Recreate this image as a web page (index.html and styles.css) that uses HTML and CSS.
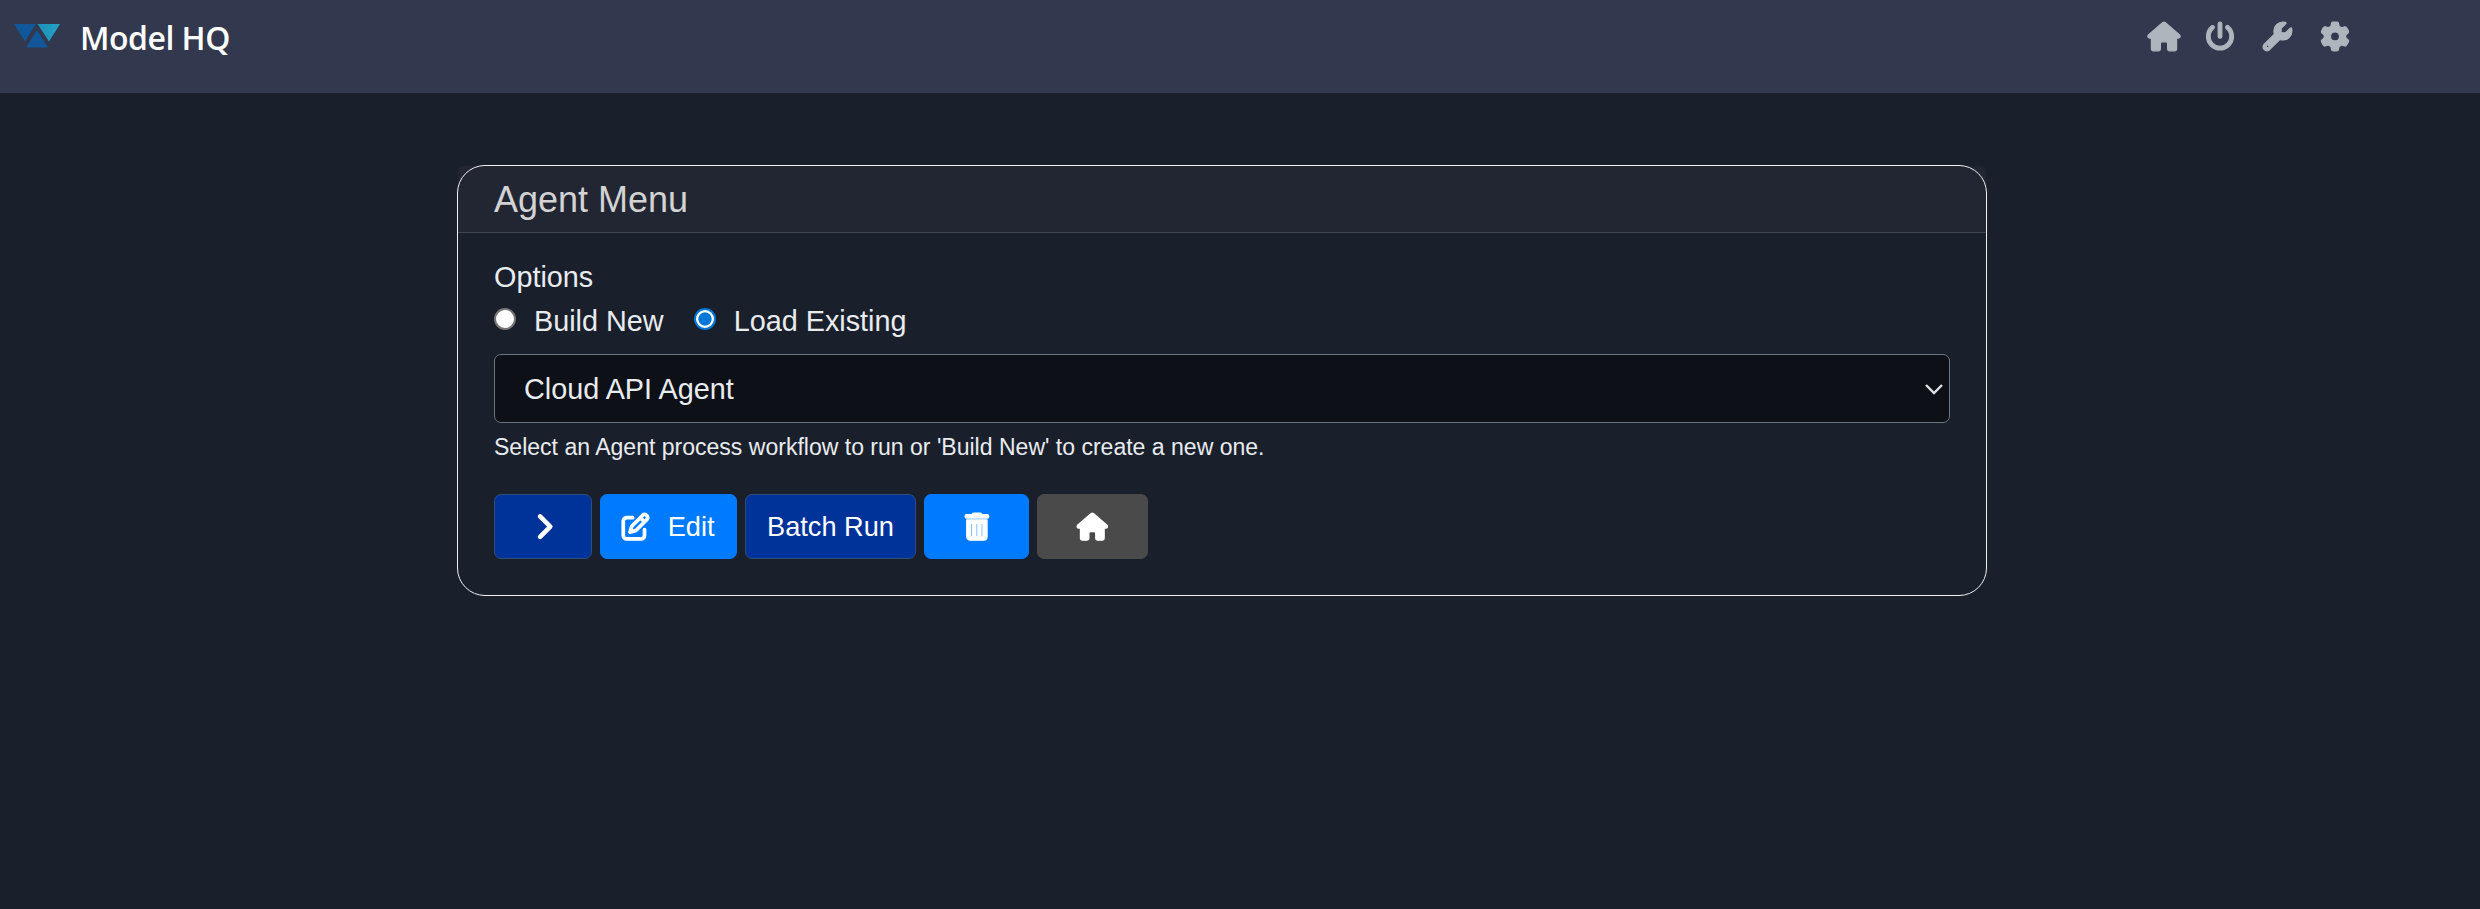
FILE: index.html
```html
<!DOCTYPE html>
<html lang="en">
<head>
<meta charset="utf-8">
<title>Model HQ</title>
<link rel="stylesheet" href="styles.css">
</head>
<body>
<svg class="sprite" width="0" height="0" aria-hidden="true">
  <symbol id="house" viewBox="0 0 576 512" overflow="visible"><path d="M575.8 255.5c0 18-15 32.100-32 32.100h-32l.7 160.200c0 2.700-.2 5.400-.5 8.100V472c0 22.100-17.900 40-40 40H456c-1.100 0-2.200 0-3.300-.1c-1.400 .1-2.800 .1-4.200 .1H416 392c-22.100 0-40-17.900-40-40V448 384c0-17.700-14.300-32-32-32H256c-17.700 0-32 14.300-32 32v64 24c0 22.100-17.900 40-40 40H160 128.100c-1.500 0-3-.1-4.500-.2c-1.200 .1-2.400 .2-3.600 .2H104c-22.100 0-40-17.900-40-40V360c0-.9 0-1.900 .1-2.800V287.600H32c-18 0-32-14-32-32.100c0-9 3-17 10-24L266.400 8c7-7 15-8 22-8s15 2 21 7L564.800 231.500c8 7 12 15 11 24z"/></symbol>
</svg>
<header class="navbar">
  <a class="brand">
    <svg class="logo" viewBox="0 0 48 26">
      <defs><linearGradient id="teal" x1="0" y1="0" x2="1" y2="0"><stop offset="0" stop-color="#1c8fb8"/><stop offset="1" stop-color="#25a3c9"/></linearGradient></defs>
      <path d="M1 1H23L12 18.500Z" fill="#10589a"/>
      <path d="M24.500 1H47L36 18.500Z" fill="url(#teal)"/>
      <path d="M24 7L35 24.500H13Z" fill="#14569a"/>
    </svg>
    <span class="brand-name">Model HQ</span>
  </a>
  <nav class="nav-icons">
    <svg class="icon-house" viewBox="0 0 576 512"><use href="#house"/></svg>
    <svg class="icon-power" viewBox="0 0 512 512"><path d="M288 32c0-17.700-14.300-32-32-32s-32 14.300-32 32V256c0 17.700 14.300 32 32 32s32-14.300 32-32V32zM143.500 120.600c13.600-11.300 15.400-31.500 4.100-45.100s-31.500-15.400-45.100-4.100C49.700 115.400 16 181.800 16 256c0 132.500 107.500 240 240 240s240-107.500 240-240c0-74.200-33.800-140.600-86.600-184.600c-13.600-11.300-33.800-9.400-45.100 4.100s-9.400 33.800 4.100 45.100c38.900 32.300 63.500 81 63.500 135.400c0 97.200-78.800 176-176 176s-176-78.800-176-176c0-54.400 24.700-103.100 63.500-135.400z"/></svg>
    <svg class="icon-wrench" viewBox="0 0 512 512"><path d="M352 320c88.400 0 160-71.600 160-160c0-15.300-2.200-30.100-6.200-44.200c-3.100-10.800-16.400-13.200-24.300-5.300l-76.800 76.800c-3 3-7.100 4.700-11.300 4.700H336c-8.800 0-16-7.200-16-16V118.600c0-4.200 1.700-8.300 4.700-11.300l76.800-76.800c7.900-7.900 5.400-21.200-5.300-24.300C382.100 2.200 367.300 0 352 0C263.600 0 192 71.600 192 160c0 19.100 3.400 37.500 9.500 54.500L19.900 396.100C7.200 408.800 0 426.100 0 444.100C0 481.600 30.400 512 67.900 512c18 0 35.300-7.200 48-19.900L297.500 310.500c17 6.200 35.400 9.500 54.500 9.500zM80 408a24 24 0 1 1 0 48 24 24 0 1 1 0-48z"/></svg>
    <svg class="icon-gear" viewBox="0 0 512 512"><path d="M495.900 166.600c3.200 8.700 .5 18.400-6.400 24.600l-43.300 39.400c1.100 8.300 1.700 16.800 1.700 25.400s-.6 17.100-1.700 25.400l43.300 39.400c6.900 6.200 9.600 15.900 6.400 24.600c-4.400 11.900-9.700 23.300-15.800 34.300l-4.700 8.100c-6.600 11-14 21.400-22.100 31.200c-5.900 7.200-15.700 9.600-24.500 6.800l-55.700-17.700c-13.400 10.300-28.200 18.900-44 25.400l-12.500 57.100c-2 9.100-9 16.300-18.200 17.800c-13.800 2.300-28 3.500-42.500 3.500s-28.700-1.200-42.500-3.500c-9.200-1.500-16.200-8.700-18.200-17.800l-12.500-57.100c-15.800-6.500-30.600-15.100-44-25.400L83.100 425.900c-8.800 2.800-18.600 .3-24.500-6.800c-8.100-9.800-15.500-20.200-22.100-31.200l-4.700-8.100c-6.100-11-11.400-22.400-15.800-34.300c-3.200-8.700-.5-18.400 6.400-24.600l43.300-39.400C64.600 273.100 64 264.600 64 256s.6-17.100 1.700-25.400L22.400 191.200c-6.900-6.200-9.600-15.900-6.400-24.600c4.400-11.900 9.700-23.300 15.800-34.300l4.700-8.100c6.600-11 14-21.400 22.100-31.200c5.900-7.200 15.700-9.600 24.500-6.800l55.700 17.700c13.400-10.300 28.200-18.900 44-25.400l12.500-57.100c2-9.100 9-16.300 18.200-17.800C227.300 1.200 241.500 0 256 0s28.700 1.200 42.500 3.500c9.200 1.500 16.200 8.700 18.200 17.800l12.500 57.100c15.800 6.500 30.600 15.100 44 25.400l55.700-17.700c8.800-2.800 18.600-.3 24.500 6.800c8.100 9.800 15.500 20.200 22.100 31.200l4.700 8.100c6.100 11 11.400 22.400 15.800 34.300zM256 336a80 80 0 1 0 0-160 80 80 0 1 0 0 160z"/></svg>
  </nav>
</header>
<main class="card">
  <h1 class="card-header">Agent Menu</h1>
  <form class="card-body">
    <div class="options-label">Options</div>
    <div class="radios">
      <label class="radio"><span class="dot"></span>Build New</label>
      <label class="radio"><span class="dot checked"></span>Load Existing</label>
    </div>
    <div class="select">
      <span>Cloud API Agent</span>
      <svg class="caret" viewBox="0 0 18 11"><path d="M1 1L9 9L17 1"/></svg>
    </div>
    <div class="hint">Select an Agent process workflow to run or 'Build New' to create a new one.</div>
    <div class="buttons">
      <button type="button" class="btn navy go"><svg class="icon-chevron" viewBox="0 0 320 512"><path d="M310.600 233.400c12.500 12.500 12.500 32.800 0 45.300l-192 192c-12.500 12.500-32.800 12.500-45.300 0s-12.500-32.800 0-45.300L242.700 256 73.400 86.600c-12.500-12.500-12.500-32.800 0-45.300s32.800-12.500 45.300 0l192 192z"/></svg></button>
      <button type="button" class="btn blue edit"><svg class="icon-pen" viewBox="0 0 512 512"><path d="M441 58.900L453.100 71c9.400 9.400 9.400 24.600 0 33.900L424 134.100 377.900 88 407 58.900c9.400-9.400 24.600-9.400 33.900 0zM209.800 256.200L344 121.900 390.100 168 255.800 302.200c-2.900 2.900-6.500 5-10.400 6.100l-58.500 16.700 16.700-58.500c1.100-3.900 3.200-7.500 6.100-10.400zM373.100 25L175.800 222.200c-8.700 8.700-15 19.400-18.300 31.100l-28.600 100c-2.400 8.400-.1 17.400 6.100 23.600s15.200 8.500 23.600 6.100l100-28.600c11.800-3.400 22.500-9.700 31.100-18.300L487 138.900c28.100-28.100 28.100-73.700 0-101.800L474.900 25C446.800-3.100 401.200-3.100 373.100 25zM88 64C39.400 64 0 103.400 0 152V424c0 48.600 39.400 88 88 88H360c48.600 0 88-39.400 88-88V312c0-13.300-10.700-24-24-24s-24 10.700-24 24V424c0 22.100-17.900 40-40 40H88c-22.100 0-40-17.900-40-40V152c0-22.100 17.900-40 40-40H200c13.300 0 24-10.700 24-24s-10.700-24-24-24H88z"/></svg><span class="edit-label">Edit</span></button>
      <button type="button" class="btn navy batch">Batch Run</button>
      <button type="button" class="btn blue delete"><svg class="icon-trash" viewBox="0 0 448 512"><path d="M135.200 17.700C140.600 6.800 151.700 0 163.800 0H284.200c12.100 0 23.200 6.800 28.600 17.700L320 32h96c17.700 0 32 14.300 32 32s-14.300 32-32 32H32C14.300 96 0 81.700 0 64S14.300 32 32 32h96l7.200-14.300zM32 128H416V448c0 35.300-28.700 64-64 64H96c-35.300 0-64-28.700-64-64V128zm96 64c-8.800 0-16 7.200-16 16V432c0 8.800 7.200 16 16 16s16-7.200 16-16V208c0-8.800-7.200-16-16-16zm96 0c-8.800 0-16 7.200-16 16V432c0 8.800 7.200 16 16 16s16-7.200 16-16V208c0-8.800-7.200-16-16-16zm96 0c-8.800 0-16 7.200-16 16V432c0 8.800 7.200 16 16 16s16-7.200 16-16V208c0-8.800-7.200-16-16-16z"/></svg></button>
      <button type="button" class="btn gray home"><svg class="icon-home" viewBox="0 0 576 512"><use href="#house"/></svg></button>
    </div>
  </form>
</main>
</body>
</html>
```
FILE: styles.css
```css
* { box-sizing: border-box; }
body {
  margin: 0;
  min-height: 909px;
  background: #1a1f2c;
  color: #e9ecef;
  font-family: "Liberation Sans", Arial, sans-serif;
  font-size: 28.8px;
}
svg { display: block; fill: currentColor; flex: none; overflow: visible; }
.sprite { position: absolute; }
.nav-icons svg, .btn svg { stroke: currentColor; stroke-width: 22; stroke-linejoin: round; }
.navbar {
  height: 93px;
  padding: 0 130px 0 13px;
  display: flex;
  justify-content: space-between;
  align-items: flex-start;
  background: #32384d;
}
.brand { display: flex; align-items: center; height: 72px; gap: 19px; }
.logo { width: 48px; height: 26px; }
.brand-name {
  padding-top: 3px;
  color: #fff;
  font: 600 32px/44px "Open Sans", "Noto Sans", sans-serif;
  letter-spacing: -0.5px;
}
.nav-icons { display: flex; align-items: center; height: 72px; color: #adb5bd; }
.nav-icons svg { height: 28.8px; }
.icon-house { width: 34px; margin-right: 24px; }
.icon-power { width: 30px; margin-right: 27px; }
.icon-wrench { width: 31px; margin-right: 27px; }
.icon-gear { width: 30px; }

.card {
  width: 1530px;
  height: 431px;
  margin: 72px 0 0 457px;
  border: 1px solid #f0f1f4;
  border-radius: 28px;
}
.card-header {
  margin: 0;
  height: 67px;
  padding: 0 36px;
  border-bottom: 1px solid rgba(255, 255, 255, 0.17);
  border-radius: 5px 5px 0 0;
  background: rgba(255, 255, 255, 0.035);
  background-clip: padding-box;
  color: #d3d3d3;
  font-size: 36px;
  font-weight: 400;
  line-height: 67px;
}
.card-body { padding: 22px 36px 0; }
.options-label { line-height: 44px; }
.radios { display: flex; gap: 30px; height: 44px; line-height: 44px; }
.radio { display: flex; gap: 18px; }
.dot {
  width: 22px;
  height: 22px;
  margin-top: 9px;
  border: 2px solid #767676;
  border-radius: 50%;
  background: #fff;
}
.dot.checked {
  border-color: #0075d8;
  background: radial-gradient(circle, #0078d7 6.2px, #fff 7px);
}
.select {
  display: flex;
  justify-content: space-between;
  align-items: center;
  height: 69px;
  margin-top: 11px;
  padding: 1px 6px 0 29px;
  border: 1px solid #6c757d;
  border-radius: 7px;
  background: #0d1017;
}
.caret { width: 18px; height: 11px; fill: none; stroke: #dee2e6; stroke-width: 2.4; }
.hint { margin-top: 7px; font-size: 23.04px; line-height: 35px; }
.buttons { display: flex; gap: 8px; margin-top: 29px; }
.btn {
  display: flex;
  align-items: center;
  justify-content: center;
  height: 65px;
  padding: 0;
  border: 1px solid transparent;
  border-radius: 7px;
  color: #fff;
  font: 27.2px "Liberation Sans", Arial, sans-serif;
}
.navy { background: #003399; border-color: #2e5078; }
.blue { background: #007bff; border-color: #007bff; }
.gray { background: #4a4a4a; border-color: #4a4a4a; }
.go { width: 98px; }
.edit { width: 137px; gap: 18px; }
.edit-label { padding-top: 1px; }
.batch { width: 171px; }
.delete { width: 105px; }
.home { width: 111px; }
.icon-chevron { width: 17px; height: 27.2px; }
.icon-pen { width: 27.2px; height: 27.2px; }
.icon-trash { width: 23.8px; height: 27.2px; }
.icon-home { width: 30.6px; height: 27.2px; }
```
